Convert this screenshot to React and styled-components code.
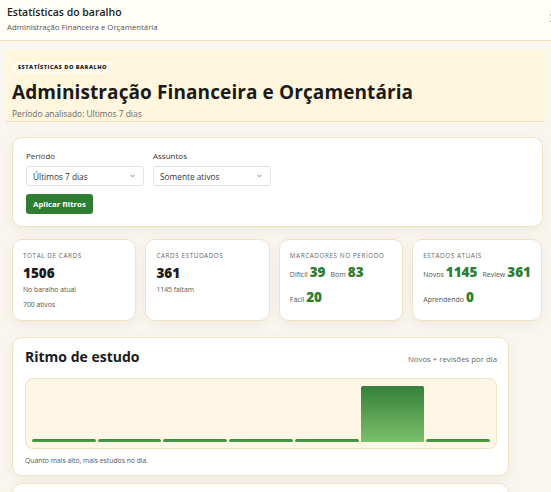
import React from "react";
import styled, { createGlobalStyle } from "styled-components";

const Global = createGlobalStyle`
  html, body { margin: 0; padding: 0; }
  body {
    background: #f9f6ef;
    font-family: "Open Sans", "DejaVu Sans", sans-serif;
    color: #1d1d1d;
    width: 551px;
    height: 492px;
    overflow: hidden;
  }
  * { box-sizing: border-box; }
`;

const Header = styled.header`
  position: relative;
  height: 41px;
  background: #fffdf5;
  border-bottom: 1px solid #efe1c0;
  padding: 5px 7px;
`;
const HeaderTitle = styled.div`
  font-size: 10.5px;
  font-weight: 600;
  line-height: 14px;
  color: #1d1d1d;
`;
const HeaderSub = styled.div`
  margin-top: 3px;
  font-size: 7.8px;
  line-height: 10px;
  color: #555;
`;
const Close = styled.svg`
  position: absolute;
  right: -7px;
  top: 14px;
`;

const Main = styled.main`
  padding: 9px 6px 0 6px;
`;

const Hero = styled.section`
  display: flex;
  flex-direction: column;
  align-items: flex-start;
  background: #fff6dd;
  border-bottom: 1px solid #efe1c0;
  padding: 12px 6px 1px 6px;
`;
const Badge = styled.span`
  display: block;
  background: #fffbef;
  border-radius: 8px;
  padding: 2px 6px;
  font-size: 5.6px;
  font-weight: 800;
  letter-spacing: 0.5px;
  line-height: 7px;
  text-transform: uppercase;
  color: #222;
`;
const HeroTitle = styled.h1`
  margin: 6px 0 0 0;
  font-size: 19px;
  font-weight: 700;
  line-height: 26px;
  color: #1a1a1a;
  letter-spacing: 0.1px;
`;
const HeroSub = styled.div`
  margin-top: 3px;
  font-size: 8.4px;
  line-height: 12px;
  color: #666;
`;

const Content = styled.div`
  padding: 15px 2px 0 6px;
`;

const Card = styled.div`
  background: #fff;
  border: 1px solid #f0e3c4;
  border-radius: 10px;
  box-shadow: 0 4px 12px rgba(120, 100, 50, 0.07);
`;

const FilterCard = styled(Card)`
  padding: 12px 13px 12px 13px;
`;
const FilterRow = styled.div`
  display: flex;
  gap: 9px;
`;
const Field = styled.div`
  display: flex;
  flex-direction: column;
`;
const Label = styled.label`
  font-size: 8px;
  line-height: 11px;
  color: #333;
  margin-bottom: 5px;
`;
const Select = styled.div`
  width: 118px;
  height: 20px;
  border: 1px solid #e2e2e2;
  border-radius: 3px;
  display: flex;
  align-items: center;
  justify-content: space-between;
  padding: 0 8px 0 6px;
  font-size: 8.3px;
  color: #333;
`;
const Button = styled.button`
  margin-top: 8px;
  height: 20px;
  padding: 0 7px;
  border: 0;
  border-radius: 3px;
  background: #2e7d32;
  color: #fff;
  font-family: inherit;
  font-size: 7.8px;
  font-weight: 700;
`;

const Stats = styled.div`
  margin-top: 12px;
  display: grid;
  grid-template-columns: repeat(4, 1fr);
  gap: 9px;
  padding-right: 1px;
`;
const StatCard = styled(Card)`
  height: 82px;
  padding: 11px 10px;
`;
const StatLabel = styled.div`
  font-size: 6.3px;
  letter-spacing: 0.6px;
  line-height: 9px;
  text-transform: uppercase;
  color: #666;
`;
const BigNum = styled.div`
  margin-top: 4px;
  font-size: 13.5px;
  font-weight: 800;
  line-height: 18px;
  color: #1a1a1a;
`;
const Small = styled.div`
  margin-top: ${(p) => p.$mt || 4}px;
  font-size: 6.8px;
  line-height: 10px;
  color: #555;
`;
const Inline = styled.div`
  margin-top: ${(p) => p.$mt || 3}px;
  display: flex;
  align-items: baseline;
  gap: 5px;
  font-size: 7px;
  color: #555;
  line-height: 18px;
`;
const Pair = styled.span`
  display: inline-flex;
  align-items: baseline;
  gap: 2px;
`;
const Green = styled.b`
  font-size: 13.5px;
  font-weight: 800;
  color: #2e7d32;
`;

const ChartCard = styled(Card)`
  margin-top: 16px;
  width: 497px;
  padding: 9px 11px 10px 12px;
`;
const ChartHead = styled.div`
  display: flex;
  justify-content: space-between;
  align-items: baseline;
`;
const ChartTitle = styled.h2`
  margin: 0;
  font-size: 14px;
  font-weight: 700;
  line-height: 20px;
  color: #1a1a1a;
`;
const ChartNote = styled.span`
  font-size: 7.8px;
  color: #666;
`;
const ChartArea = styled.div`
  margin-top: 11px;
  height: 71px;
  background: #fff7e5;
  border: 1px solid #f0e3c4;
  border-radius: 8px;
  padding: 6px 6px 6px 6px;
  display: grid;
  grid-template-columns: repeat(7, 1fr);
  gap: 2px;
  align-items: end;
`;
const Bar = styled.div`
  height: ${(p) => p.$h}px;
  border-radius: 2px 2px 1px 1px;
  background: ${(p) =>
    p.$big
      ? "linear-gradient(180deg, #34803a 0%, #7cc069 100%)"
      : "linear-gradient(180deg, #3a8a3e 0%, #4f9e48 100%)"};
`;
const Foot = styled.div`
  margin-top: 7px;
  font-size: 6.8px;
  color: #555;
`;
const NextCard = styled(Card)`
  margin-top: 7px;
  width: 497px;
  height: 20px;
`;

const Chevron = () => (
  <svg width="5" height="4" viewBox="0 0 6 4" fill="none">
    <path d="M1 1l2 2 2-2" stroke="#666" strokeWidth="1" strokeLinecap="round" strokeLinejoin="round" />
  </svg>
);

const bars = [3, 3, 3, 3, 3, 56, 3];

export default function App() {
  return (
    <>
      <Global />
      <Header>
        <HeaderTitle>Estatísticas do baralho</HeaderTitle>
        <HeaderSub>Administração Financeira e Orçamentária</HeaderSub>
        <Close width="8" height="8" viewBox="0 0 10 10">
          <path d="M1 1l8 8M9 1l-8 8" stroke="#444" strokeWidth="1.3" strokeLinecap="round" />
        </Close>
      </Header>
      <Main>
        <Hero>
          <Badge>Estatísticas do baralho</Badge>
          <HeroTitle>Administração Financeira e Orçamentária</HeroTitle>
          <HeroSub>Período analisado: Ultimos 7 dias</HeroSub>
        </Hero>
        <Content>
          <FilterCard>
            <FilterRow>
              <Field>
                <Label>Período</Label>
                <Select>
                  <span>Últimos 7 dias</span>
                  <Chevron />
                </Select>
              </Field>
              <Field>
                <Label>Assuntos</Label>
                <Select>
                  <span>Somente ativos</span>
                  <Chevron />
                </Select>
              </Field>
            </FilterRow>
            <Button>Aplicar filtros</Button>
          </FilterCard>
          <Stats>
            <StatCard>
              <StatLabel>Total de cards</StatLabel>
              <BigNum>1506</BigNum>
              <Small $mt={3}>No baralho atual</Small>
              <Small $mt={5}>700 ativos</Small>
            </StatCard>
            <StatCard>
              <StatLabel>Cards estudados</StatLabel>
              <BigNum>361</BigNum>
              <Small $mt={3}>1145 faltam</Small>
            </StatCard>
            <StatCard>
              <StatLabel>Marcadores no período</StatLabel>
              <Inline>
                <Pair>Difícil <Green>39</Green></Pair>
                <Pair>Bom <Green>83</Green></Pair>
              </Inline>
              <Inline $mt={4}>
                <Pair>Fácil <Green>20</Green></Pair>
              </Inline>
            </StatCard>
            <StatCard>
              <StatLabel>Estados atuais</StatLabel>
              <Inline>
                <Pair>Novos <Green>1145</Green></Pair>
                <Pair>Review <Green>361</Green></Pair>
              </Inline>
              <Inline $mt={4}>
                <Pair>Aprendendo <Green>0</Green></Pair>
              </Inline>
            </StatCard>
          </Stats>
          <ChartCard>
            <ChartHead>
              <ChartTitle>Ritmo de estudo</ChartTitle>
              <ChartNote>Novos + revisões por dia</ChartNote>
            </ChartHead>
            <ChartArea>
              {bars.map((h, i) => (
                <Bar key={i} $h={h} $big={h > 10} />
              ))}
            </ChartArea>
            <Foot>Quanto mais alto, mais estudos no dia.</Foot>
          </ChartCard>
          <NextCard />
        </Content>
      </Main>
    </>
  );
}
